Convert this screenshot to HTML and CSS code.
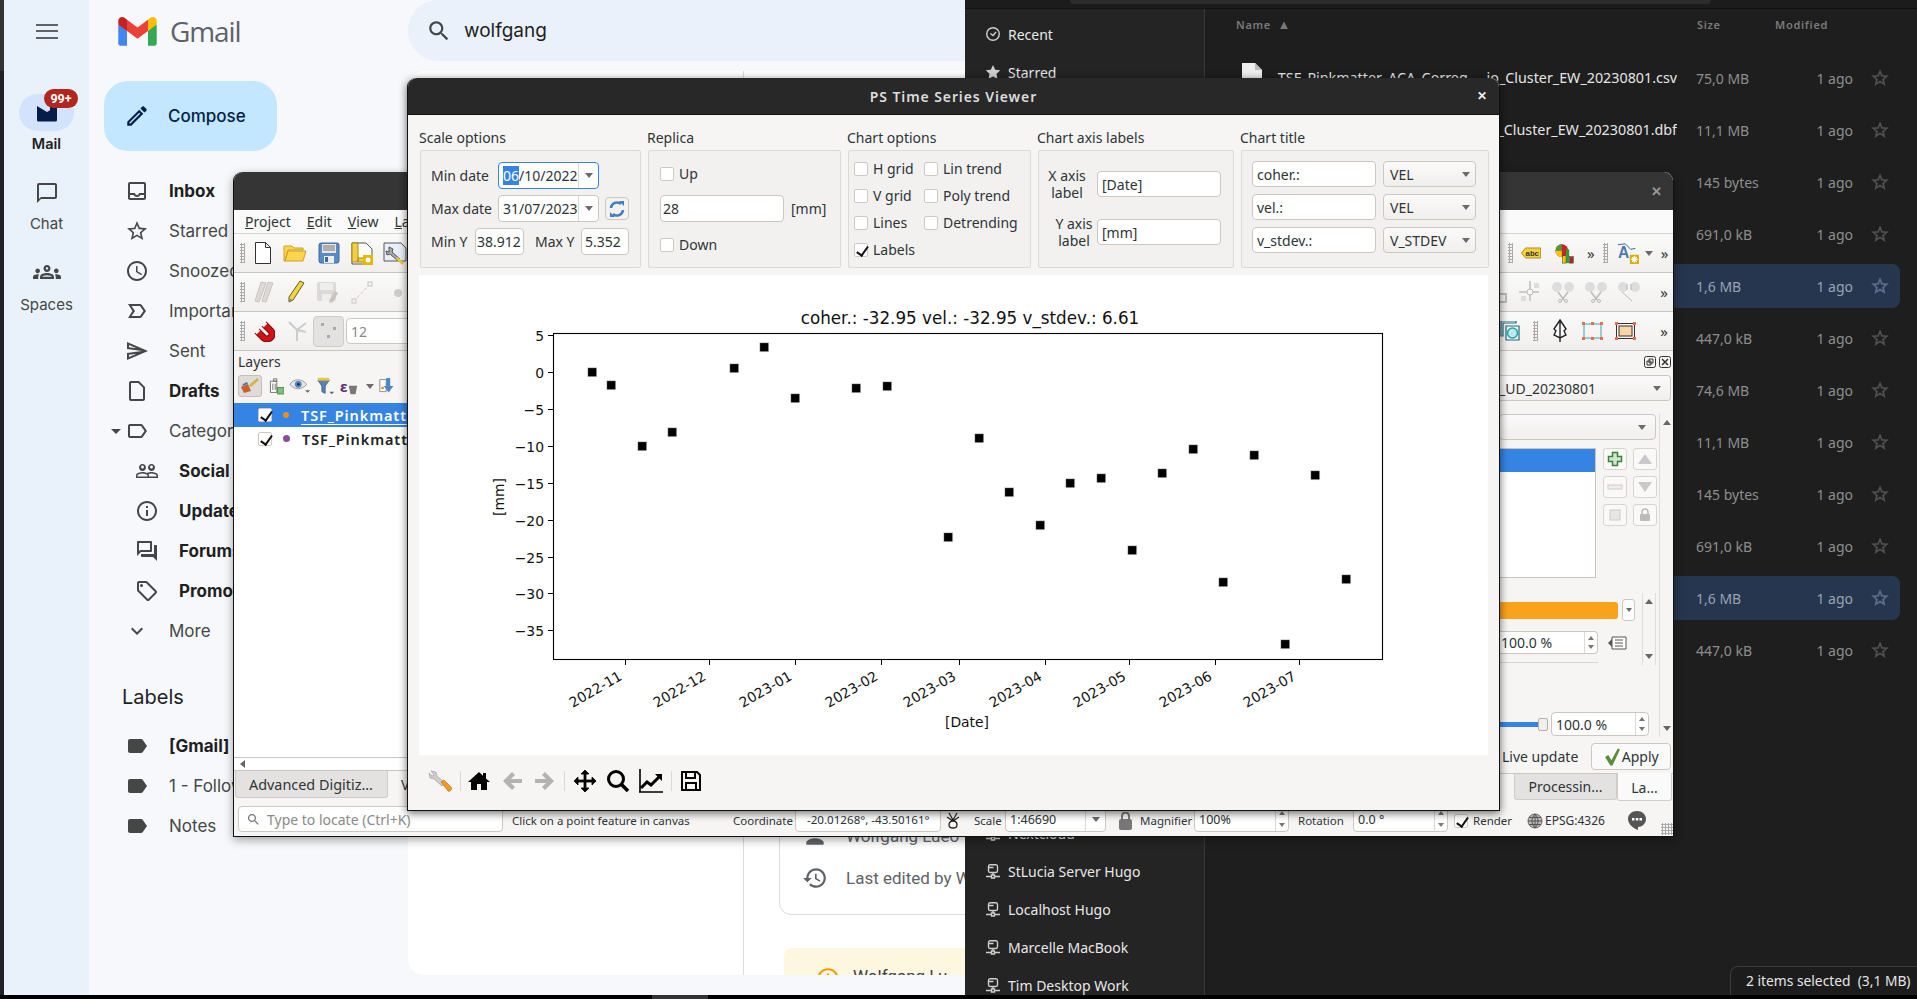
FILE: index.html
```html
<!DOCTYPE html>
<html lang="en">
<head>
  <meta charset="UTF-8">
  <title>PS Time Series Viewer</title>
  <link rel="stylesheet" href="styles.css">
</head>
<body>
  <svg class="defs" width="0" height="0">
    <defs>
      <symbol id="i-label" viewBox="0 0 24 24"><path d="M17.63 5.84C17.27 5.33 16.67 5 16 5L5 5.01C3.9 5.01 3 5.9 3 7v10c0 1.1.9 1.99 2 1.99L16 19c.67 0 1.27-.33 1.63-.84L22 12l-4.37-6.16z"/></symbol>
      <symbol id="i-net" viewBox="0 0 16 16"><path fill="none" stroke="currentColor" stroke-width="1.4" d="M3.500 3.500c0-1 .6-1.800 1.500-1.800h6c.9 0 1.500.8 1.500 1.800v4.300c0 1-.6 1.700-1.500 1.700H5c-.9 0-1.500-.7-1.500-1.700zM3.500 4.500h5M8 9.500V12M1 13.500h5M10 13.500h5M6.500 12h3v3h-3z"/></symbol>
      <symbol id="i-star" viewBox="0 0 16 16"><path fill="none" stroke="currentColor" stroke-width="1.6" d="M8 2.200l1.700 3.900 4.200.4-3.200 2.800 1 4.100L8 11.200 4.300 13.400l1-4.100L2.100 6.500l4.200-.4z"/></symbol>
      <g id="mk"><rect x="-4.500" y="-4.500" width="9" height="9" fill="#000" stroke="#ddd" stroke-width=".6"/></g>
    </defs>
  </svg>

  <div class="edge"></div>

  <!-- gmail behind everything -->
  <div class="gmail">
    <div class="rail">
      <svg class="burger" width="24" height="18" viewBox="0 0 24 18"><path fill="#5f6368" d="M1 2h22v2H1zM1 8h22v2H1zM1 15h22v2H1z"/></svg>
      <div class="rail-pill">
        <svg width="24" height="24" viewBox="0 0 24 24"><path fill="#041e49" d="M2 5l10 6 3-1.800V5h7v14c0 1-.8 1.500-1.500 1.500h-17C2.800 20.500 2 20 2 19z"/></svg>
        <span class="badge">99+</span>
      </div>
      <div class="rail-text rail-on">Mail</div>
      <svg class="rail-icon" width="24" height="24" viewBox="0 0 24 24"><path fill="#444746" d="M20 2H4c-1.100 0-2 .9-2 2v18l4-4h14c1.100 0 2-.9 2-2V4c0-1.100-.9-2-2-2zm0 14H6l-2 2V4h16v12z"/></svg>
      <div class="rail-text">Chat</div>
      <svg class="rail-icon rail-spaces" width="28" height="28" viewBox="0 0 24 24"><path fill="#444746" d="M4 13c1.100 0 2-.9 2-2s-.9-2-2-2-2 .9-2 2 .9 2 2 2zm1.130 1.100c-.37-.06-.74-.1-1.130-.1-.99 0-1.930.21-2.780.58C.48 14.900 0 15.620 0 16.430V18h4.500v-1.610c0-.83.23-1.610.63-2.290zM20 13c1.100 0 2-.9 2-2s-.9-2-2-2-2 .9-2 2 .9 2 2 2zm4 3.430c0-.81-.48-1.530-1.220-1.850-.85-.37-1.790-.58-2.780-.58-.39 0-.76.04-1.130.1.4.68.63 1.460.63 2.290V18H24v-1.570zm-7.760-2.780c-1.170-.52-2.610-.9-4.240-.9-1.630 0-3.070.39-4.240.9C6.680 14.130 6 15.210 6 16.390V18h12v-1.610c0-1.180-.68-2.260-1.760-2.740zM8.070 16c.09-.23.13-.39.91-.69.97-.38 1.990-.56 3.020-.56s2.050.18 3.020.56c.77.3.81.46.91.69H8.070zM12 8c.55 0 1 .45 1 1s-.45 1-1 1-1-.45-1-1 .45-1 1-1m0-2c-1.660 0-3 1.340-3 3s1.340 3 3 3 3-1.340 3-3-1.340-3-3-3z"/></svg>
      <div class="rail-text">Spaces</div>
    </div>

    <div class="side">
      <div class="logo">
        <svg width="39" height="29" viewBox="0 0 256 193">
          <path fill="#4285F4" d="M58.182 192.050V93.140L27.507 65.077 0 49.504v125.091c0 9.658 7.825 17.455 17.455 17.455h40.727Z"/>
          <path fill="#34A853" d="M197.818 192.050h40.727c9.659 0 17.455-7.826 17.455-17.455V49.505l-31.156 17.837-27.026 25.798v98.910Z"/>
          <path fill="#EA4335" d="m58.182 93.140-4.174-38.647 4.174-36.989L128 69.868l69.818-52.364 4.669 34.992-4.669 40.644L128 145.504z"/>
          <path fill="#FBBC04" d="M197.818 17.504V93.140L256 49.504V26.231c0-21.585-24.640-33.890-41.890-20.945l-16.292 12.218Z"/>
          <path fill="#C5221F" d="M0 49.504l26.759 20.070L58.182 93.140V17.504L41.890 5.286C24.610-7.660 0 4.646 0 26.230v23.273Z"/>
        </svg>
        <span class="logo-text">Gmail</span>
      </div>
      <div class="compose">
        <svg width="26" height="26" viewBox="0 0 24 24"><path fill="#041e49" d="M3 17.250V21h3.750L17.810 9.940l-3.750-3.750L3 17.250zM5.920 19H5v-.92l9.060-9.060.92.92L5.920 19zM20.710 7.040c.39-.39.39-1.020 0-1.410l-2.340-2.340c-.2-.2-.45-.29-.71-.29s-.51.1-.7.29l-1.830 1.830 3.750 3.750 1.830-1.830z"/></svg>
        <span>Compose</span>
      </div>
      <ul class="nav">
        <li class="bold"><svg viewBox="0 0 24 24"><path d="M19 3H5c-1.100 0-2 .9-2 2v14c0 1.100.9 2 2 2h14c1.100 0 2-.9 2-2V5c0-1.100-.9-2-2-2zm0 16H5v-3h3.560c.69 1.190 1.970 2 3.450 2s2.750-.81 3.450-2H19v3zm0-5h-4.990c0 1.100-.9 2-2 2s-2-.9-2-2H5V5h14v9z"/></svg>Inbox</li>
        <li><svg viewBox="0 0 24 24"><path d="M22 9.240l-7.190-.62L12 2 9.190 8.630 2 9.240l5.460 4.730L5.820 21 12 17.270 18.180 21l-1.630-7.030L22 9.240zM12 15.400l-3.760 2.270 1-4.280-3.320-2.880 4.380-.38L12 6.100l1.710 4.040 4.380.38-3.320 2.880 1 4.280L12 15.400z"/></svg>Starred</li>
        <li><svg viewBox="0 0 24 24"><path d="M11.990 2C6.470 2 2 6.480 2 12s4.470 10 9.990 10C17.520 22 22 17.520 22 12S17.520 2 11.990 2zM12 20c-4.420 0-8-3.580-8-8s3.580-8 8-8 8 3.580 8 8-3.580 8-8 8zm.5-13H11v6l5.250 3.150.75-1.230-4.500-2.670z"/></svg>Snoozed</li>
        <li><svg viewBox="0 0 24 24"><path d="M15 19H3l4.500-7L3 5h12c.65 0 1.260.31 1.630.84L21 12l-4.370 6.160c-.37.52-.98.84-1.630.84zm-8.500-2H15l3.500-5L15 7H6.500l3.500 5-3.500 5z"/></svg>Important</li>
        <li><svg viewBox="0 0 24 24"><path d="M4.010 6.030l7.510 3.220-7.520-1 .01-2.220m7.500 8.720L4 17.970v-2.220l7.510-1M2.010 3L2 10l15 2-15 2 .01 7L23 12 2.010 3z"/></svg>Sent</li>
        <li class="bold"><svg viewBox="0 0 24 24"><path d="M14 2H6c-1.100 0-1.990.9-1.990 2L4 20c0 1.100.89 2 1.990 2H18c1.100 0 2-.9 2-2V8l-6-6zM6 20V4h7.200L18 8.800V20H6z"/></svg>Drafts</li>
        <li class="caret"><svg viewBox="0 0 24 24"><path d="M17.630 5.840C17.270 5.330 16.670 5 16 5L5 5.010C3.900 5.010 3 5.900 3 7v10c0 1.100.9 1.990 2 1.990L16 19c.67 0 1.270-.33 1.630-.84L22 12l-4.370-6.160zM16 17H5V7h11l3.550 5L16 17z"/></svg>Categories</li>
        <li class="sub bold"><svg viewBox="0 0 24 24"><path d="M16.500 13c-1.200 0-3.070.34-4.500 1-1.430-.67-3.300-1-4.500-1C5.330 13 1 14.080 1 16.250V19h22v-2.750c0-2.170-4.330-3.250-6.500-3.250zm-4 4.500h-10v-1.250c0-.54 2.560-1.750 5-1.750s5 1.210 5 1.750v1.250zm9 0H14v-1.250c0-.46-.2-.86-.52-1.220.88-.3 1.960-.53 3.020-.53 2.440 0 5 1.210 5 1.750v1.250zM7.500 12c1.930 0 3.500-1.570 3.500-3.500S9.430 5 7.500 5 4 6.570 4 8.500 5.570 12 7.500 12zm0-5.500c.83 0 1.500.67 1.500 1.500s-.67 1.500-1.500 1.500S6 8.830 6 8s.67-1.500 1.500-1.500zm9 5.500c1.930 0 3.500-1.570 3.500-3.500S18.430 5 16.500 5 13 6.570 13 8.500s1.570 3.500 3.500 3.500zm0-5.500c.83 0 1.500.67 1.500 1.500s-.67 1.500-1.500 1.500S15 8.830 15 8s.67-1.500 1.500-1.500z"/></svg>Social</li>
        <li class="sub bold"><svg viewBox="0 0 24 24"><path d="M11 7h2v2h-2zm0 4h2v6h-2zm1-9C6.480 2 2 6.480 2 12s4.480 10 10 10 10-4.480 10-10S17.520 2 12 2zm0 18c-4.410 0-8-3.590-8-8s3.590-8 8-8 8 3.590 8 8-3.590 8-8 8z"/></svg>Updates</li>
        <li class="sub bold"><svg viewBox="0 0 24 24"><path d="M15 4v7H5.170L4 12.170V4h11m1-2H3c-.55 0-1 .45-1 1v14l4-4h10c.55 0 1-.45 1-1V3c0-.55-.45-1-1-1zm5 4h-2v9H6v2c0 .55.45 1 1 1h11l4 4V7c0-.55-.45-1-1-1z"/></svg>Forums</li>
        <li class="sub bold"><svg viewBox="0 0 24 24"><path d="M21.410 11.580l-9-9C12.050 2.220 11.550 2 11 2H4c-1.100 0-2 .9-2 2v7c0 .55.22 1.050.59 1.420l9 9c.36.36.86.58 1.410.58s1.050-.22 1.410-.59l7-7c.37-.36.59-.86.59-1.410s-.23-1.060-.59-1.420zM13 20.010L4 11V4h7v-.01l9 9-7 7.020z"/><circle cx="6.500" cy="6.500" r="1.500"/></svg>Promotions</li>
        <li><svg viewBox="0 0 24 24"><path d="M16.590 8.590L12 13.170 7.410 8.590 6 10l6 6 6-6z"/></svg>More</li>
      </ul>
      <div class="labels-title">Labels</div>
      <ul class="nav nav-labels">
        <li class="bold"><svg><use href="#i-label"/></svg>[Gmail]</li>
        <li><svg><use href="#i-label"/></svg>1 - Follow up</li>
        <li><svg><use href="#i-label"/></svg>Notes</li>
      </ul>
    </div>

    <div class="gm-main">
      <div class="search">
        <svg width="26" height="26" viewBox="0 0 24 24"><path fill="#444746" d="M15.500 14h-.79l-.28-.27C15.410 12.590 16 11.110 16 9.500 16 5.910 13.090 3 9.500 3S3 5.910 3 9.500 5.910 16 9.500 16c1.610 0 3.090-.59 4.230-1.570l.27.28v.79l5 4.990L20.490 19l-4.990-5zm-6 0C7.010 14 5 11.990 5 9.500S7.010 5 9.500 5 14 7.010 14 9.500 11.990 14 9.500 14z"/></svg>
        <span>wolfgang</span>
      </div>
      <div class="mail-card">
        <div class="mail-body"></div>
        <div class="mail-aside">
          <div class="doc-box">
            <div class="doc-row doc-owner">
              <svg width="26" height="26" viewBox="0 0 24 24"><path fill="#5f6368" d="M4 18v2h16v-2c0-2.700-5.300-4-8-4s-8 1.300-8 4z"/></svg>
              <span>Wolfgang Lueo</span>
            </div>
            <div class="doc-row">
              <svg width="26" height="26" viewBox="0 0 24 24"><path fill="#5f6368" d="M13 3c-4.970 0-9 4.030-9 9H1l3.890 3.890.07.14L9 12H6c0-3.870 3.130-7 7-7s7 3.130 7 7-3.130 7-7 7c-1.930 0-3.680-.79-4.940-2.060l-1.420 1.420C8.270 19.990 10.510 21 13 21c4.970 0 9-4.030 9-9s-4.030-9-9-9zm-1 5v5l4.280 2.540.72-1.210-3.500-2.080V8H12z"/></svg>
              <span>Last edited by W</span>
            </div>
          </div>
          <div class="note">
            <svg width="26" height="26" viewBox="0 0 24 24"><path fill="#f29900" d="M11 15h2v2h-2zm0-8h2v6h-2zm1-5C6.480 2 2 6.480 2 12s4.480 10 10 10 10-4.480 10-10S17.520 2 12 2zm0 18c-4.410 0-8-3.590-8-8s3.590-8 8-8 8 3.590 8 8-3.590 8-8 8z"/></svg>
            <span>Wolfgang Lu</span>
          </div>
        </div>
      </div>
    </div>
  </div>

  <!-- file manager -->
  <div class="files">
    <div class="files-top"><div class="files-search"></div></div>
    <div class="files-wrap">
      <ul class="places">
        <li><svg width="16" height="16" viewBox="0 0 16 16"><circle cx="8" cy="8" r="6.300" fill="none" stroke="currentColor" stroke-width="1.400"/><path fill="none" stroke="currentColor" stroke-width="1.400" d="M5.500 7.500L8 9.500l3-3.500"/></svg>Recent</li>
        <li><svg width="16" height="16" viewBox="0 0 16 16"><path fill="currentColor" d="M8 1l2.200 4.700 5.100.6-3.800 3.500 1 5.100L8 12.400 3.500 14.900l1-5.100L.7 6.300l5.100-.6z"/></svg>Starred</li>
        <li class="places-gap"><svg><use href="#i-net"/></svg>Nextcloud</li>
        <li><svg><use href="#i-net"/></svg>StLucia Server Hugo</li>
        <li><svg><use href="#i-net"/></svg>Localhost Hugo</li>
        <li><svg><use href="#i-net"/></svg>Marcelle MacBook</li>
        <li><svg><use href="#i-net"/></svg>Tim Desktop Work</li>
      </ul>
      <div class="file-list">
        <div class="file-head"><span class="fh-name">Name <em>&#9650;</em></span><span class="fh-size">Size</span><span>Modified</span></div>
        <div class="file-row"><span class="f-name"><svg class="f-doc" width="21" height="26" viewBox="0 0 21 26"><path fill="#eee" d="M1 0h13l7 7v19H1z"/><path fill="#bbb" d="M14 0l7 7h-7z"/></svg>TSF_Pinkmatter_ACA_Correg... &#160;io_Cluster_EW_20230801.csv</span><span class="f-size">75,0 MB</span><span class="f-mod">1 ago</span><svg class="f-star"><use href="#i-star"/></svg></div>
        <div class="file-row"><span class="f-name">TSF_Pinkmatter_ACA_Correg... &#160;io_Cluster_EW_20230801.dbf</span><span class="f-size">11,1 MB</span><span class="f-mod">1 ago</span><svg class="f-star"><use href="#i-star"/></svg></div>
        <div class="file-row"><span class="f-name"></span><span class="f-size">145 bytes</span><span class="f-mod">1 ago</span><svg class="f-star"><use href="#i-star"/></svg></div>
        <div class="file-row"><span class="f-name"></span><span class="f-size">691,0 kB</span><span class="f-mod">1 ago</span><svg class="f-star"><use href="#i-star"/></svg></div>
        <div class="file-row sel"><span class="f-name"></span><span class="f-size">1,6 MB</span><span class="f-mod">1 ago</span><svg class="f-star"><use href="#i-star"/></svg></div>
        <div class="file-row"><span class="f-name"></span><span class="f-size">447,0 kB</span><span class="f-mod">1 ago</span><svg class="f-star"><use href="#i-star"/></svg></div>
        <div class="file-row"><span class="f-name"></span><span class="f-size">74,6 MB</span><span class="f-mod">1 ago</span><svg class="f-star"><use href="#i-star"/></svg></div>
        <div class="file-row"><span class="f-name"></span><span class="f-size">11,1 MB</span><span class="f-mod">1 ago</span><svg class="f-star"><use href="#i-star"/></svg></div>
        <div class="file-row"><span class="f-name"></span><span class="f-size">145 bytes</span><span class="f-mod">1 ago</span><svg class="f-star"><use href="#i-star"/></svg></div>
        <div class="file-row"><span class="f-name"></span><span class="f-size">691,0 kB</span><span class="f-mod">1 ago</span><svg class="f-star"><use href="#i-star"/></svg></div>
        <div class="file-row sel"><span class="f-name"></span><span class="f-size">1,6 MB</span><span class="f-mod">1 ago</span><svg class="f-star"><use href="#i-star"/></svg></div>
        <div class="file-row"><span class="f-name"></span><span class="f-size">447,0 kB</span><span class="f-mod">1 ago</span><svg class="f-star"><use href="#i-star"/></svg></div>
      </div>
    </div>
    <div class="file-status">2 items selected &nbsp;(3,1 MB)</div>
  </div>
  <div class="bottom-bar"><div class="bottom-tab"></div></div>

  <!-- qgis main window -->
  <div class="qgis">
    <div class="q-title"><span class="q-close">&#10005;</span></div>
    <div class="q-menu"><span><u>P</u>roject</span><span><u>E</u>dit</span><span><u>V</u>iew</span><span><u>L</u>ayer</span></div>

    <div class="q-tools">
      <div class="q-left">
        <i class="grip"></i>
        <svg width="20" height="24" viewBox="0 0 20 24"><path fill="#fff" stroke="#333" d="M2.500 1.500h10l5 5v16h-15zM12.500 1.500v5h5"/></svg>
        <svg class="t1" width="24" height="20" viewBox="0 0 24 20"><path fill="#fcd54d" stroke="#c9a227" d="M1 3h8l2 2h9v2H5L2 18H1zM5 8h18l-3 10H2z"/></svg>
        <svg class="t1b" width="22" height="22" viewBox="0 0 22 22"><rect x="1" y="1" width="20" height="20" rx="2" fill="#5b8ac1" stroke="#3e6a9e"/><rect x="4" y="2" width="14" height="9" fill="#e6e6e6"/><path stroke="#777" d="M5 4h12M5 6h12M5 8h12"/><rect x="6" y="14" width="10" height="7" fill="#eee"/><rect x="7" y="15" width="3" height="5" fill="#3e6a9e"/></svg>
        <svg class="t1" width="24" height="24" viewBox="0 0 24 24"><path fill="#fff" stroke="#555" d="M2 2h14l6 6v15H2z"/><path fill="#f1cf3e" stroke="#a98a1b" d="M2 2h6v19H2zM8 17h8v4H8z"/><rect x="13" y="14" width="10" height="10" fill="#e6b800"/><circle cx="18" cy="19" r="2.500" fill="#fff"/></svg>
        <svg class="t1c" width="24" height="24" viewBox="0 0 24 24"><path fill="#e9effa" stroke="#555" d="M1 2h17l5 5v13H1z"/><path fill="#aaa" stroke="#555" d="M6 6l4 2-1 3 8 7-2 2-8-7-3 1-1-4 3 1z"/><path fill="#ecc93b" d="M15 16l6 6-2 2-6-6z"/></svg>
      </div>
      <div class="q-right">
        <i class="grip"></i>
        <svg class="r-abc" width="22" height="12" viewBox="0 0 22 12"><path fill="#f4d03f" stroke="#a98a1b" d="M5 .5h16.500v11H5L.5 6z"/><text x="5" y="9" font-size="8.500" font-weight="700" fill="#333" font-family="Liberation Sans">abc</text></svg>
        <svg class="r-pie" width="21" height="21" viewBox="0 0 21 21"><circle cx="7.500" cy="7.500" r="7" fill="#c22"/><path fill="#4c9a3a" d="M7.500.5A7 7 0 0 0 .5 7.500l7 0z"/><path fill="#f1c40f" d="M.5 7.500A7 7 0 0 0 7.500 14.500v-7z"/><rect x="8" y="13" width="4" height="8" fill="#f1c40f" stroke="#333" stroke-width=".5"/><rect x="12" y="6" width="3.500" height="15" fill="#2e9a38"/><rect x="16" y="14" width="4" height="7" fill="#b22" stroke="#333" stroke-width=".5"/></svg>
        <span class="more">&#187;</span>
        <i class="grip r-grip"></i>
        <svg class="r-a" width="24" height="24" viewBox="0 0 24 24"><path fill="none" stroke="#2c5a92" d="M1 3l8-1 6 6 5-1"/><text x="1" y="18" font-size="17" font-weight="700" fill="#4a79b4" font-family="Liberation Sans">A</text><rect x="14" y="14" width="10" height="10" rx="1" fill="#d9ae10"/><path stroke="#fff" stroke-width="1.500" d="M19 15.500v7M15.500 19h7M16.500 16.500l5 5M21.500 16.500l-5 5"/></svg>
        <i class="drop r-drop"></i>
        <span class="more">&#187;</span>
      </div>
    </div>

    <div class="q-tools">
      <div class="q-left faded">
        <i class="grip"></i>
        <svg width="24" height="24" viewBox="0 0 24 24"><path fill="#ddd9d6" stroke="#c8c4c0" d="M8 2l5 1L6 22 2 21zM15 2l5 1-7 19-4-1z"/></svg>
        <svg class="t2" width="18" height="24" viewBox="0 0 18 24"><path fill="#f1d546" stroke="#6b5c10" d="M13 1l4 2L6 20l-4 2 0-5z"/><path fill="#888" d="M2 18l3 2-3 2z"/></svg>
        <svg class="t2b" width="24" height="24" viewBox="0 0 24 24"><rect x="1" y="2" width="19" height="19" rx="2" fill="#ddd9d6"/><rect x="4" y="3" width="13" height="7" fill="#eee"/><rect x="6" y="14" width="9" height="7" fill="#eee"/><path fill="#c8c4c0" d="M19 11l3 2-5 9-4 1 1-4z"/></svg>
        <svg class="t2" width="24" height="24" viewBox="0 0 24 24"><path stroke="#c8c4c0" stroke-dasharray="3 2" d="M4 21L20 4"/><rect x="2" y="19" width="4" height="4" fill="#f6f5f4" stroke="#c8c4c0"/><rect x="18" y="2" width="4" height="4" fill="#f6f5f4" stroke="#c8c4c0"/></svg>
        <svg class="t2c" width="24" height="24" viewBox="0 0 24 24"><circle cx="12" cy="13" r="4" fill="#ccc"/></svg>
      </div>
      <div class="q-right faded">
        <svg class="r2-a" width="24" height="24" viewBox="0 0 24 24"><path fill="none" stroke="#bbb" stroke-width="2" d="M0 8h10M4 14h12v8H4z"/></svg>
        <svg class="r2-b" width="24" height="24" viewBox="0 0 24 24"><path stroke="#ccc" stroke-width="2" fill="none" d="M12 1v20M1 12h20"/><circle cx="12" cy="12" r="3" fill="#f6f5f4" stroke="#bbb"/><rect x="16" y="3" width="5" height="5" fill="#ddd"/><rect x="3" y="16" width="5" height="5" fill="#ddd"/></svg>
        <svg class="r2" width="24" height="24" viewBox="0 0 24 24"><circle cx="6" cy="7" r="5" fill="#ddd"/><circle cx="18" cy="7" r="5" fill="#ddd"/><path fill="none" stroke="#bbb" stroke-width="1.500" d="M7 12l6 8M17 12l-6 8"/><circle cx="9" cy="21" r="1.500" fill="none" stroke="#bbb"/><circle cx="15" cy="21" r="1.500" fill="none" stroke="#bbb"/></svg>
        <svg class="r2" width="24" height="24" viewBox="0 0 24 24"><circle cx="6" cy="7" r="5" fill="#ddd"/><circle cx="18" cy="7" r="5" fill="#ddd"/><path fill="none" stroke="#bbb" stroke-width="1.500" d="M7 12l6 8M17 12l-6 8"/><circle cx="9" cy="21" r="1.500" fill="none" stroke="#bbb"/><circle cx="15" cy="21" r="1.500" fill="none" stroke="#bbb"/></svg>
        <svg class="r2" width="24" height="24" viewBox="0 0 24 24"><circle cx="6" cy="7" r="5" fill="#ddd"/><circle cx="18" cy="7" r="5" fill="#ddd"/><path fill="none" stroke="#bbb" d="M5 12l10 9M10 4v6M14 4v6"/></svg>
        <span class="more">&#187;</span>
      </div>
    </div>

    <div class="q-tools">
      <div class="q-left">
        <i class="grip"></i>
        <svg class="magnet" width="22" height="22" viewBox="0 0 22 22"><path fill="none" stroke="#7d0a0a" stroke-width="7" d="M4 11l7 7a5 5 0 0 0 7-7l-7-7"/><path fill="none" stroke="#cf1212" stroke-width="5" d="M4 11l7 7a5 5 0 0 0 7-7l-7-7"/><path stroke="#f3f3f3" stroke-width="5" d="M3.500 10.500l2 2M10.500 3.500l2 2"/></svg>
        <svg class="t3 faded" width="24" height="24" viewBox="0 0 24 24"><path fill="none" stroke="#ccc" stroke-width="2" d="M4 3l8 8 9-7M12 11v11M12 11l9 2"/></svg>
        <span class="snap-btn"><svg width="24" height="20" viewBox="0 0 24 20"><rect x="4" y="2" width="3" height="3" fill="#aaa"/><rect x="16" y="6" width="3" height="3" fill="#aaa"/><rect x="10" y="14" width="3" height="3" fill="#aaa"/></svg></span>
        <span class="field snap-num">12</span>
      </div>
      <div class="q-right">
        <svg class="r3a" width="20" height="20" viewBox="0 0 20 20"><path fill="none" stroke="#1f6f7a" stroke-width="1.200" d="M1 0h15v2H3v13H1zM6 5h13v14H6z"/><circle cx="12.500" cy="12" r="5" fill="#bfe9ee" stroke="#25a2b0" stroke-width="1.500"/></svg>
        <i class="grip r-grip3"></i>
        <svg class="r3b" width="16" height="24" viewBox="0 0 16 24"><path fill="#fff" stroke="#222" stroke-width="1.400" d="M8 1l6 9-2 2 2 4-6 3-6-3 2-4-2-2zM8 1v22"/></svg>
        <svg class="r3c" width="21" height="18" viewBox="0 0 21 18"><rect x="2" y="2" width="17" height="14" fill="none" stroke="#3aa6b8"/><path fill="#ef6c4a" d="M0 0h3v3H0zM18 0h3v3h-3zM0 15h3v3H0zM18 15h3v3h-3zM9 0h3v3H9zM9 15h3v3H9z"/></svg>
        <svg class="r3d" width="21" height="18" viewBox="0 0 21 18"><rect x="4" y="4" width="13" height="10" fill="#fcd5a6" stroke="#333"/><rect x="1.500" y="1.500" width="18" height="15" fill="none" stroke="#333"/><path fill="#ef6c4a" d="M0 0h3v3H0zM18 0h3v3h-3zM0 15h3v3H0zM18 15h3v3h-3z"/></svg>
        <span class="more">&#187;</span>
      </div>
    </div>

    <div class="q-body">
      <div class="layers">
        <div class="layers-title">Layers</div>
        <div class="layers-tools">
          <span class="pressed"><svg width="20" height="16" viewBox="0 0 20 16"><path fill="#c8622a" d="M1 9l7-3 3 7-7 2z"/><path fill="#4a6fb5" d="M3 6l4-2 1 2-6 2z"/><path stroke="#d6b13c" stroke-width="2.500" d="M10 8l8-7"/></svg></span>
          <svg width="16" height="18" viewBox="0 0 20 22"><path fill="#fff" stroke="#555" d="M3 5h8v14H3zM7 2h4v3H7z"/><path stroke="#555" d="M6 8v8M9 8v8"/><rect x="12" y="13" width="8" height="8" fill="#7fbf7f" stroke="#3f7f3f"/></svg>
          <svg width="22" height="16" viewBox="0 0 26 18"><path fill="#e2e5ea" stroke="#8a8f99" d="M1 7c5-7 14-7 20 0-6 7-15 7-20 0z"/><circle cx="11" cy="7" r="4" fill="#4f84bd"/><circle cx="11" cy="7" r="1.500" fill="#223"/><path fill="#666" d="M19 14h6l-3 3z"/></svg>
          <svg width="18" height="18" viewBox="0 0 22 22"><path fill="#5883b5" stroke="#3a5f8c" d="M1 4h14L10 11v9l-4-2v-7z"/><rect x="1" y="1" width="14" height="3.500" fill="#e8c93c"/><path fill="#666" d="M15 18h6l-3 3z"/></svg>
          <span class="eps"><b>&#949;</b><svg width="10" height="10" viewBox="0 0 12 12"><path fill="#777" d="M1 1h10l-2 10H3z"/></svg></span>
          <i class="drop"></i>
          <svg width="16" height="18" viewBox="0 0 20 22"><path fill="#fff" stroke="#777" d="M1 3h8v15H1z"/><path fill="#4a86c8" d="M9 1h5v10h4l-6 8-6-8h3z"/><rect x="3" y="12" width="3" height="3" fill="#e08c2c"/></svg>
        </div>
        <div class="layer-tree">
          <div class="layer on"><i class="check tick"></i><i class="dot dot-o"></i><span>TSF_Pinkmatter_ACA_Correg</span></div>
          <div class="layer"><i class="check tick"></i><i class="dot dot-p"></i><span>TSF_Pinkmatter_ACA_Correg</span></div>
        </div>
        <div class="hscroll"><i class="arrow-left"></i></div>
        <div class="dock-tabs"><span class="dock-tab">Advanced Digitiz...</span><span class="dock-tab2">Vector</span></div>
      </div>

      <div class="style-panel">
        <div class="panel-head">
          <svg width="12" height="12" viewBox="0 0 12 12"><rect x=".5" y=".5" width="11" height="11" rx="2" fill="none" stroke="#333"/><path fill="none" stroke="#333" d="M5 3h4v4H5zM3 5h4v4H3z"/></svg>
          <svg width="12" height="12" viewBox="0 0 12 12"><rect x=".5" y=".5" width="11" height="11" rx="2" fill="none" stroke="#333"/><path stroke="#333" stroke-width="1.500" d="M3 3l6 6M9 3l-6 6"/></svg>
        </div>
        <div class="combo layer-combo"><span>_UD_20230801</span><i class="drop"></i></div>
        <div class="panel-wrap">
          <div class="panel-main">
            <div class="combo symbol-combo"><i class="drop"></i></div>
            <div class="sym-row">
              <div class="sym-list"><div class="sym-on"></div></div>
              <div class="sym-btns">
                <span class="sq"><svg width="16" height="16" viewBox="0 0 16 16"><path fill="#cfe6cf" stroke="#3f7f3f" stroke-width="1.500" d="M5.500 1.500h5v4h4v5h-4v4h-5v-4h-4v-5h4z"/></svg></span>
                <span class="sq"><svg width="16" height="16" viewBox="0 0 16 16"><path fill="#c9c9c9" d="M8 3l7 10H1z"/></svg></span>
                <span class="sq"><svg width="16" height="16" viewBox="0 0 16 16"><rect x="1" y="6" width="14" height="4" fill="#eee" stroke="#d8c6c6"/></svg></span>
                <span class="sq"><svg width="16" height="16" viewBox="0 0 16 16"><path fill="#c9c9c9" d="M8 13L1 3h14z"/></svg></span>
                <span class="sq"><svg width="16" height="16" viewBox="0 0 16 16"><rect x="3" y="3" width="10" height="10" fill="#e6e6e6" stroke="#ccc"/></svg></span>
                <span class="sq"><svg width="16" height="16" viewBox="0 0 16 16"><rect x="3" y="7" width="10" height="7" rx="1" fill="#bbb"/><path fill="none" stroke="#bbb" stroke-width="1.500" d="M5 7V5a3 3 0 0 1 6 0v2"/></svg></span>
              </div>
            </div>
            <div class="color-wrap">
              <div class="color-left">
                <div class="color-row"><div class="color-bar"></div><span class="color-drop"><i class="drop"></i></span></div>
                <div class="opacity-row">
                  <span class="field spin-a">100.0 %<i class="spin"></i></span>
                  <svg width="22" height="18" viewBox="0 0 22 18"><path fill="#fff" stroke="#555" d="M5 3h14v12H5z"/><path stroke="#555" d="M8 6h8M8 9h8M8 12h8"/><path fill="#555" d="M1 9l4-4v8z"/></svg>
                </div>
                <div class="hline"></div>
              </div>
              <div class="mini-scroll"><i class="up"></i><b></b><i class="down"></i></div>
            </div>
            <div class="slider-row">
              <div class="slider"><b></b></div>
              <span class="field spin-b">100.0 %<i class="spin"></i></span>
            </div>
          </div>
          <div class="side-scroll"><i class="up"></i><b></b><i class="down"></i></div>
        </div>
        <div class="apply-row">
          <span>Live update</span>
          <span class="apply"><svg width="17" height="19" viewBox="0 0 16 17"><path fill="#5b8c3a" d="M1 9l3-2 3 5L13 1l2 1-7 15H6z"/></svg>Apply</span>
        </div>
        <div class="panel-tabs"><span class="ptab">Processin...</span><span class="ptab ptab-on">La...</span></div>
      </div>
    </div>

    <div class="q-status">
      <div class="locator"><svg width="15" height="15" viewBox="0 0 24 24"><path fill="#777" d="M15.500 14h-.79l-.28-.27C15.410 12.590 16 11.110 16 9.500 16 5.910 13.090 3 9.500 3S3 5.910 3 9.500 5.910 16 9.500 16c1.610 0 3.090-.59 4.230-1.570l.27.28v.79l5 4.990L20.490 19l-4.990-5zm-6 0C7.010 14 5 11.990 5 9.500S7.010 5 9.500 5 14 7.010 14 9.500 11.990 14 9.500 14z"/></svg>Type to locate (Ctrl+K)</div>
      <span class="st-msg">Click on a point feature in canvas</span>
      <span class="st-lab">Coordinate</span>
      <span class="field st-coord">-20.01268&#176;, -43.50161&#176;</span>
      <svg class="st-ico" width="16" height="17" viewBox="0 0 16 17"><path fill="none" stroke="#222" stroke-width="1.300" d="M4 1l4 7 4-7M2 5l6 4 6-4M8 9c-3 0-4 2-4 4s2 3 4 3 4-1 4-3-1-4-4-4z"/></svg>
      <span class="st-lab st-scale">Scale</span>
      <span class="field st-scalebox">1:46690<i class="st-arrow"><i class="drop"></i></i></span>
      <svg class="st-lock" width="13" height="18" viewBox="0 0 13 18"><rect y="7" width="13" height="11" rx="2" fill="#777"/><path fill="none" stroke="#777" stroke-width="2" d="M3 7V4a3.500 3.500 0 0 1 7 0v3"/></svg>
      <span class="st-lab st-mag">Magnifier</span>
      <span class="field st-spin">100%<i class="spin"></i></span>
      <span class="st-lab st-rot">Rotation</span>
      <span class="field st-spin st-rotbox">0.0 &#176;<i class="spin"></i></span>
      <i class="check tick st-check"></i>
      <span class="st-lab st-render">Render</span>
      <svg class="st-globe" width="16" height="16" viewBox="0 0 16 16"><circle cx="8" cy="8" r="7" fill="#bbb" stroke="#666"/><path fill="none" stroke="#555" d="M1 8h14M2 4.500h12M2 11.500h12M8 1v14M8 1c-4 4-4 10 0 14M8 1c4 4 4 10 0 14"/></svg>
      <span class="st-lab st-epsg">EPSG:4326</span>
      <svg class="st-msgs" width="18" height="19" viewBox="0 0 18 19"><path fill="#555" d="M9 0c5 0 9 3.500 9 8s-4 8-8 8v3c-5-2-10-6-10-11C0 3.500 4 0 9 0z"/><path fill="#fff" d="M4 7h2.500v2.500H4zM7.800 7h2.500v2.500H7.800zM11.500 7H14v2.500h-2.500z"/></svg>
      <i class="grip st-grip"></i>
    </div>
  </div>

  <!-- plugin dialog on top -->
  <div class="viewer">
    <div class="v-title">PS Time Series Viewer<span class="v-close">&#10005;</span></div>
    <div class="v-options">
      <section class="group">
        <h4>Scale options</h4>
        <div class="box box-scale">
          <div class="o-row"><label class="lab-date">Min date</label><span class="field date focus"><span><mark>06</mark>/10/2022</span><i class="date-arrow"><i class="drop"></i></i></span></div>
          <div class="o-row"><label class="lab-date">Max date</label><span class="field date"><span>31/07/2023</span><i class="date-arrow"><i class="drop"></i></i></span>
            <span class="refresh"><svg width="16" height="18" viewBox="0 0 16 18"><path fill="none" stroke="#3f7fc1" stroke-width="2.500" d="M2 8a6 6 0 0 1 10-4M14 10a6 6 0 0 1-10 4"/><path fill="#3f7fc1" d="M10 1h5v5zM6 17H1v-5z"/></svg></span></div>
          <div class="o-row"><label class="lab-miny">Min Y</label><span class="field num-a">38.912</span><label class="lab-maxy">Max Y</label><span class="field num-b">5.352</span></div>
        </div>
      </section>
      <section class="group">
        <h4>Replica</h4>
        <div class="box box-replica">
          <div class="o-row rep-up"><i class="check"></i><span class="chk-text">Up</span></div>
          <div class="o-row rep-mid"><span class="field rep-input">28</span><span class="rep-unit">[mm]</span></div>
          <div class="o-row"><i class="check"></i><span class="chk-text">Down</span></div>
        </div>
      </section>
      <section class="group">
        <h4>Chart options</h4>
        <div class="box box-chart">
          <div class="c-item"><i class="check"></i>H grid</div><div class="c-item"><i class="check"></i>Lin trend</div>
          <div class="c-item"><i class="check"></i>V grid</div><div class="c-item"><i class="check"></i>Poly trend</div>
          <div class="c-item"><i class="check"></i>Lines</div><div class="c-item"><i class="check"></i>Detrending</div>
          <div class="c-item"><i class="check tick"></i>Labels</div>
        </div>
      </section>
      <section class="group">
        <h4>Chart axis labels</h4>
        <div class="box box-axis">
          <div class="a-row"><label>X axis<br>label</label><span class="field">[Date]</span></div>
          <div class="a-row a-y"><label>Y axis<br>label</label><span class="field">[mm]</span></div>
        </div>
      </section>
      <section class="group">
        <h4>Chart title</h4>
        <div class="box box-title">
          <span class="field">coher.:</span><span class="combo">VEL<i class="drop"></i></span>
          <span class="field">vel.:</span><span class="combo">VEL<i class="drop"></i></span>
          <span class="field">v_stdev.:</span><span class="combo">V_STDEV<i class="drop"></i></span>
        </div>
      </section>
    </div>

    <div class="v-chart">
      <svg class="plot" width="1070" height="480" viewBox="419 275 1070 480">
        <text class="p-title" x="970" y="324" text-anchor="middle">coher.: -32.95 vel.: -32.95 v_stdev.: 6.61</text>
        <rect x="553.500" y="333.500" width="829" height="326" fill="#fff" stroke="#000" stroke-width="1.100"/>
        <g stroke="#000" stroke-width="1">
          <path d="M548 335.500h5M548 372.500h5M548 409.500h5M548 446.500h5M548 483.500h5M548 520.500h5M548 557.500h5M548 593.500h5M548 630.500h5"/>
          <path d="M625.500 660v5M709.500 660v5M795.500 660v5M881.500 660v5M959.500 660v5M1045.500 660v5M1129.500 660v5M1215.500 660v5M1299.500 660v5"/>
        </g>
        <g class="p-ticks" text-anchor="end">
          <text x="544" y="341">5</text>
          <text x="544" y="378">0</text>
          <text x="544" y="415">&#8722;5</text>
          <text x="544" y="452">&#8722;10</text>
          <text x="544" y="489">&#8722;15</text>
          <text x="544" y="526">&#8722;20</text>
          <text x="544" y="563">&#8722;25</text>
          <text x="544" y="599">&#8722;30</text>
          <text x="544" y="636">&#8722;35</text>
          <text transform="rotate(-30 623 679)" x="623" y="679">2022-11</text>
          <text transform="rotate(-30 707 679)" x="707" y="679">2022-12</text>
          <text transform="rotate(-30 793 679)" x="793" y="679">2023-01</text>
          <text transform="rotate(-30 879 679)" x="879" y="679">2023-02</text>
          <text transform="rotate(-30 957 679)" x="957" y="679">2023-03</text>
          <text transform="rotate(-30 1043 679)" x="1043" y="679">2023-04</text>
          <text transform="rotate(-30 1127 679)" x="1127" y="679">2023-05</text>
          <text transform="rotate(-30 1213 679)" x="1213" y="679">2023-06</text>
          <text transform="rotate(-30 1297 679)" x="1297" y="679">2023-07</text>
        </g>
        <text class="p-ticks" x="967" y="727" text-anchor="middle">[Date]</text>
        <text class="p-ticks" transform="rotate(-90 504 497)" x="504" y="497" text-anchor="middle">[mm]</text>
        <g>
          <use href="#mk" x="592.300" y="372.300"/><use href="#mk" x="611.300" y="385.300"/><use href="#mk" x="642.300" y="446.300"/>
          <use href="#mk" x="672.300" y="432.300"/><use href="#mk" x="734.300" y="368.300"/><use href="#mk" x="764.300" y="347.300"/>
          <use href="#mk" x="795.300" y="398.300"/><use href="#mk" x="856.300" y="388.300"/><use href="#mk" x="887.300" y="386.300"/>
          <use href="#mk" x="948.300" y="537.300"/><use href="#mk" x="979.300" y="438.300"/><use href="#mk" x="1009.300" y="492.300"/>
          <use href="#mk" x="1040.300" y="525.300"/><use href="#mk" x="1070.300" y="483.300"/><use href="#mk" x="1101.300" y="478.300"/>
          <use href="#mk" x="1132.300" y="550.300"/><use href="#mk" x="1162.300" y="473.300"/><use href="#mk" x="1193.300" y="449.300"/>
          <use href="#mk" x="1223.300" y="582.300"/><use href="#mk" x="1254.300" y="455.300"/><use href="#mk" x="1285.300" y="644.300"/>
          <use href="#mk" x="1315.300" y="475.300"/><use href="#mk" x="1346.300" y="579.300"/>
        </g>
      </svg>
    </div>

    <div class="v-foot">
      <svg width="24" height="24" viewBox="0 0 24 24"><path fill="#ccc" stroke="#999" stroke-width=".6" d="M3 2l5 1 1 4 8 7-3 3-8-7-4-1-1-5 3 3 2-1z"/><path fill="#f29a24" stroke="#b9700f" stroke-width=".6" d="M13 13l3-2 7 7c1 1 1 2 0 3s-2 2-3 1z"/></svg>
      <i class="sep"></i>
      <svg width="22" height="22" viewBox="0 0 22 22"><path d="M11 2L0 12h3v8h6v-6h4v6h6v-8h3l-4-3.600V3h-3v2.700z"/></svg>
      <svg class="f-gap" width="22" height="22" viewBox="0 0 22 22"><path fill="#b3b3b3" d="M11 2l3 3-4 4h11v4H10l4 4-3 3-9-9z"/></svg>
      <svg class="f-gap" width="22" height="22" viewBox="0 0 22 22"><path fill="#b3b3b3" d="M11 2L8 5l4 4H1v4h11l-4 4 3 3 9-9z"/></svg>
      <i class="sep sep-mid"></i>
      <svg width="24" height="24" viewBox="0 0 24 24"><path d="M12 1l4 4h-3v6h6V8l4 4-4 4v-3h-6v6h3l-4 4-4-4h3v-6H5v3l-4-4 4-4v3h6V5H8z" stroke="#000" stroke-width=".8"/></svg>
      <svg class="f-gap2" width="24" height="24" viewBox="0 0 24 24"><circle cx="10" cy="10" r="7.500" fill="none" stroke="#000" stroke-width="3"/><path stroke="#000" stroke-width="3.500" d="M15 15l7 7"/></svg>
      <svg class="f-gap2" width="24" height="24" viewBox="0 0 24 24"><path stroke="#000" stroke-width="1.600" d="M0 23h24M1 0v23"/><path fill="none" stroke="#000" stroke-width="3" d="M2 19l6-6 4 3 9-9"/><path d="M16 5h7v7z"/></svg>
      <i class="sep sep-last"></i>
      <svg width="22" height="22" viewBox="0 0 22 22"><path fill="none" stroke="#000" stroke-width="2" d="M2 2h15l3 3v15H2zM6 2v6h9V2M6 20v-7h10v7"/></svg>
    </div>
  </div>
</body>
</html>
```

FILE: styles.css
```css
* { box-sizing: border-box; }
html, body { margin: 0; height: 100%; }
body { width: 1917px; height: 999px; overflow: hidden; background: #000; font-family: "Noto Sans", sans-serif; position: relative; }
ul { list-style: none; margin: 0; padding: 0; }
.defs { position: absolute; }

.edge { position: absolute; left: 0; top: 0; width: 4px; height: 995px; background: linear-gradient(#333 71px, #202124 71px); }

/* gmail */
.gmail { position: absolute; left: 4px; top: 0; width: 961px; height: 995px; display: flex; background: #f6f8fc; overflow: hidden; font-family: Inter, sans-serif; color: #444746; }
.rail { width: 85px; background: #e9f1fb; display: flex; flex-direction: column; align-items: center; padding-top: 22px; }
.burger { display: block; }
.rail-pill { width: 55px; height: 37px; margin-top: 54px; background: #d3e3fd; border-radius: 19px; display: flex; align-items: center; justify-content: center; position: relative; }
.badge { position: absolute; left: 25px; top: -5px; width: 34px; height: 19px; border-radius: 10px; background: #b3261e; color: #fff; font: 700 12.500px/19px Roboto, sans-serif; text-align: center; }
.rail-text { font-size: 15px; line-height: 18px; margin-top: 10px; }
.rail-on { color: #1f1f1f; font-weight: 600; font-size: 14.500px; margin-top: 4px; }
.rail-icon { margin-top: 28px; }
.rail-spaces { margin-top: 25px; }

.side { width: 319px; flex: none; }
.logo { height: 62px; padding-left: 29px; display: flex; align-items: center; gap: 13px; }
.logo-text { font: 400 28px "Open Sans", sans-serif; color: #5f6368; letter-spacing: -1.100px; }
.compose { margin: 19px 0 0 15px; width: 173px; height: 70px; border-radius: 24px; background: #c2e7ff; display: flex; align-items: center; padding-left: 20px; gap: 18px; font-size: 17px; font-weight: 500; color: #041e49; }
.nav { margin-top: 20px; }
.nav li { height: 40px; display: flex; align-items: center; font-size: 17px; padding-left: 36px; white-space: nowrap; position: relative; }
.nav svg { width: 24px; height: 24px; fill: #444746; margin-right: 20px; flex: none; }
.nav .bold { font-weight: 700; color: #1f1f1f; }
.nav .sub { padding-left: 46px; }
.nav .sub svg { margin-right: 20px; margin-left: 0; }
.nav .caret::before { content: ""; position: absolute; left: 22px; top: 18px; border: 5px solid transparent; border-top-color: #444746; border-bottom: 0; }
.labels-title { margin: 32px 0 0 33px; height: 28px; font-size: 20px; line-height: 28px; color: #1f1f1f; }
.nav-labels { margin-top: 15px; }

.gm-main { flex: none; width: 557px; }
.search { width: 720px; height: 61px; border-radius: 30px; background: #eaf1fb; display: flex; align-items: center; padding-left: 18px; gap: 12px; font: 400 19px Inter, sans-serif; color: #1f1f1f; margin-top: 0; }
.mail-card { margin-top: 10px; height: 904px; background: #fff; border-radius: 16px 0 0 16px; display: flex; }
.mail-body { width: 336px; border-right: 1px solid #dadce0; }
.mail-aside { flex: 1; display: flex; flex-direction: column; justify-content: flex-end; padding-left: 35px; overflow: hidden; }
.doc-box { height: 200px; width: 260px; border: 1px solid #dadce0; border-radius: 12px; padding: 60px 0 0 22px; flex: none; display: flex; flex-direction: column; justify-content: flex-end; padding-bottom: 23px; }
.doc-row { display: flex; align-items: center; gap: 18px; font: 400 17px Roboto, sans-serif; color: #5f6368; white-space: nowrap; }
.doc-owner { margin-bottom: 16px; }
.note { flex: none; height: 27px; margin: 33px 0 0 5px; width: 260px; background: #fef7e0; padding: 18px 0 0 31px; display: flex; gap: 12px; font: 400 17px Roboto, sans-serif; color: #3c4043; white-space: nowrap; overflow: hidden; border-radius: 8px 8px 0 0; }

/* files */
.files { position: absolute; left: 965px; top: 0; width: 952px; height: 995px; background: #1e1e1e; color: #e6e6e6; font-size: 14px; overflow: hidden; }
.files-top { height: 9px; background: #1c1c1c; border-bottom: 1px solid #111; padding-left: 105px; }
.files-search { width: 641px; height: 4px; background: #2d2d2d; border-radius: 0 0 6px 6px; }
.files-wrap { display: flex; height: 986px; }
.places { width: 240px; flex: none; background: #242424; border-right: 1px solid #3a3a3a; padding-top: 6px; }
.places li { height: 38px; display: flex; align-items: center; gap: 7px; padding-left: 20px; font-size: 14px; color: #e8e8e8; white-space: nowrap; }
.places svg { width: 16px; height: 16px; flex: none; color: #cfcfcf; }
.places .places-gap { margin-top: 723px; }
.file-list { flex: 1; padding-left: 20px; }
.file-head { height: 47px; display: flex; align-items: flex-start; padding: 8px 0 0 11px; font-size: 11px; font-weight: 600; color: #7a7a7a; letter-spacing: .7px; }
.fh-name { width: 461px; }
.fh-name em { font-style: normal; font-size: 13px; margin-left: 3px; line-height: 1; }
.fh-size { width: 78px; }
.file-row { height: 44px; margin-bottom: 8px; width: 675px; display: flex; align-items: center; border-radius: 8px; }
.file-row.sel { background: #26364f; }
.f-name { width: 452px; flex: none; display: flex; justify-content: flex-end; align-items: center; position: relative; white-space: nowrap; overflow: hidden; height: 44px; line-height: 44px; font-size: 14.300px; }
.f-doc { position: absolute; left: 16px; top: 7px; }
.f-size { width: 99px; flex: none; padding-left: 19px; color: #8e8e8e; white-space: nowrap; }
.f-mod { width: 61px; flex: none; text-align: right; color: #8e8e8e; white-space: nowrap; margin-left: 16px; }
.f-star { width: 18px; height: 18px; margin-left: 18px; color: #4e4e4e; }
.sel .f-star { color: #5a6c88; }
.sel .f-size, .sel .f-mod { color: #9aa3b2; }
.file-status { position: absolute; left: 765px; top: 966px; right: 0; height: 29px; background: #1c1c1c; border: 1px solid #3a3a3a; border-right: 0; border-bottom: 0; border-radius: 8px 0 0 0; padding-left: 15px; line-height: 28px; font-size: 13.800px; white-space: nowrap; color: #e6e6e6; }
.bottom-bar { position: absolute; left: 0; top: 995px; width: 1917px; height: 4px; background: #000; padding-left: 652px; }
.bottom-tab { width: 56px; height: 4px; background: #333; }

/* qgis */
.qgis { position: absolute; left: 233px; top: 172px; width: 1441px; height: 665px; background: #f6f5f4; border: 1px solid #111; border-top: 0; border-radius: 9px 9px 0 0; color: #2e3436; font-size: 14px; display: flex; flex-direction: column; box-shadow: 0 3px 10px rgba(0,0,0,.35); }
.q-title { height: 38px; flex: none; background: #353535; border-radius: 9px 9px 0 0; display: flex; justify-content: flex-end; align-items: center; padding-right: 11px; }
.q-close { color: #999; font-size: 13px; font-weight: 700; }
.q-menu { height: 24px; flex: none; display: flex; gap: 16px; padding-left: 11px; align-items: center; border-bottom: 1px solid #d8d4d0; background: #fafafa; }
.q-tools { height: 39px; flex: none; display: flex; justify-content: space-between; align-items: center; border-bottom: 1px solid #c8c4c0; background: linear-gradient(#fafafa, #f1efed); }
.q-left { display: flex; align-items: center; padding-left: 6px; }
.q-right { display: flex; align-items: center; padding-right: 2px; width: 175px; }
.grip { display: block; width: 5px; height: 20px; flex: none; background-image: radial-gradient(#aaa 1px, transparent 1.200px); background-size: 3px 3px; }
.q-left > .grip { margin-right: 8px; }
.q-left > .grip + svg { flex: none; }
.t1 { margin-left: 10px; }
.t1b { margin-left: 11px; }
.t1c { margin-left: 9px; }
.t2 { margin-left: 10px; }
.t2b { margin-left: 11px; }
.t2c { margin-left: 12px; }
.t3 { margin-left: 10px; }
.more { font-size: 15px; color: #333; width: 14px; text-align: center; line-height: 1; }
.q-right > .grip { margin-left: 10px; }
.r-abc { margin-left: 8px; }
.r-pie { margin-left: 14px; }
.q-right > .more { margin-left: auto; }
.q-right > .more:not(:last-child) { margin-left: 10px; }
.r-grip { margin-left: 6px !important; }
.r-a { margin-left: 9px; }
.r-drop { margin-left: 6px; margin-right: 5px; }
.r2-a { margin-left: -8px; }
.r2-b { margin-left: 4px; }
.r2 { margin-left: 9px; }
.r3a { margin-left: 2px; }
.r-grip3 { margin-left: 13px !important; }
.r3b { margin-left: 14px; }
.r3c { margin-left: 14px; }
.r3d { margin-left: 12px; }
.magnet { flex: none; }
.snap-btn { width: 31px; height: 31px; margin-left: 4px; background: #e4e2e0; border: 1px solid #d0ccc8; border-radius: 4px; display: flex; align-items: center; justify-content: center; flex: none; }
.snap-num { width: 120px; height: 26px; margin-left: 2px; color: #888; flex: none; }

.drop { display: inline-block; width: 0; height: 0; border: 4.500px solid transparent; border-top: 5px solid #6b6b6b; border-bottom: 0; flex: none; }

.q-body { flex: 1; min-height: 0; display: flex; justify-content: space-between; }
.layers { width: 300px; display: flex; flex-direction: column; }
.layers-title { height: 21px; line-height: 21px; padding-left: 4px; }
.layers-tools { height: 31px; display: flex; align-items: center; gap: 5.500px; padding: 0 0 3px 4px; }
.pressed { width: 24px; height: 22px; background: #dedbd8; border: 1px solid #c2bebb; border-radius: 3px; display: flex; align-items: center; justify-content: center; }
.eps { color: #5b2f7a; display: flex; align-items: flex-end; width: 20px; font-size: 15px; line-height: 18px; }
.layer-tree { height: 354px; flex: none; background: #fff; }
.layer { height: 24px; display: flex; align-items: center; padding-left: 24px; white-space: nowrap; overflow: hidden; font-weight: 600; font-size: 14.500px; letter-spacing: .9px; color: #222; }
.layer + .layer { height: 23px; }
.layer.on { background: #3584e4; color: #fff; }
.layer.on span { border-bottom: 1px solid #fff; line-height: 18px; }
.dot { width: 6px; height: 6px; border-radius: 50%; margin: 0 12px 0 11px; flex: none; }
.dot-o { background: #f28c1a; }
.dot-p { background: #8a4f96; width: 7px; height: 7px; }
.hscroll { height: 14px; flex: none; background: #fff; border-top: 1px solid #c8c4c0; border-bottom: 1px solid #c8c4c0; display: flex; align-items: center; padding-left: 6px; }
.arrow-left { width: 0; height: 0; border: 4px solid transparent; border-right: 5px solid #666; border-left: 0; }
.dock-tabs { height: 30px; display: flex; align-items: flex-start; padding-left: 1px; }
.dock-tab { height: 27px; width: 153px; background: #e4e2e0; border: 1px solid #d0ccc8; border-top: 0; border-radius: 0 0 3px 3px; padding-left: 13px; line-height: 28px; white-space: nowrap; font-size: 14.400px; }
.dock-tab2 { height: 27px; padding-left: 13px; line-height: 28px; }

.check { position: relative; display: inline-block; width: 14px; height: 14px; background: #fff; border: 1px solid #cfc9c4; border-radius: 2px; flex: none; }
.tick::after { content: ""; position: absolute; left: 4px; top: 0; width: 5px; height: 10px; border: solid #111; border-width: 0 2px 2px 0; transform: rotate(35deg); }

.style-panel { width: 174px; flex: none; display: flex; flex-direction: column; overflow: hidden; }
.panel-head { height: 20px; flex: none; display: flex; justify-content: flex-end; align-items: center; gap: 3px; padding: 2px 2px 0 0; }
.combo { height: 26px; display: flex; align-items: center; justify-content: space-between; background: linear-gradient(#fbfafa, #f1efed); border: 1px solid #cdc7c2; border-radius: 4px; padding: 0 5px 0 6px; white-space: nowrap; }
.layer-combo { flex: none; margin-top: 4px; margin-right: 2px; border-left: 0; border-radius: 0 4px 4px 0; padding: 0 9px 0 0; }
.panel-wrap { flex: none; margin-top: 13px; display: flex; height: 323px; }
.panel-main { flex: 1; padding-right: 2px; min-width: 0; }
.symbol-combo { justify-content: flex-end; margin-right: 1px; padding-right: 9px; }
.side-scroll { width: 14px; flex: none; background: #f6f5f4; border-left: 1px solid #ddd; display: flex; flex-direction: column; align-items: center; }
.side-scroll i, .mini-scroll i { display: block; flex: none; width: 0; height: 0; border: 4px solid transparent; }
.up { border-bottom: 5px solid #666 !important; border-top: 0 !important; margin: 6px 0 5px; }
.down { border-top: 5px solid #666 !important; border-bottom: 0 !important; margin: 5px 0 6px; }
.side-scroll b, .mini-scroll b { flex: 1; width: 100%; }
.sym-row { margin-top: 8px; display: flex; gap: 7px; }
.sym-list { width: 97px; height: 130px; background: #fff; border: 1px solid #c8c4c0; border-left: 0; }
.sym-on { height: 23px; background: #3584e4; }
.sym-btns { display: grid; grid-template-columns: 24px 24px; grid-auto-rows: 22px; gap: 6px; }
.sq { border: 1px solid #d8d4d0; border-radius: 3px; display: flex; align-items: center; justify-content: center; background: #faf9f8; }
.color-wrap { margin-top: 15px; display: flex; height: 72px; }
.color-left { width: 143px; }
.color-row { margin-top: 8px; height: 18px; display: flex; align-items: center; }
.color-bar { width: 119px; height: 17px; background: #f9a31d; border-radius: 0 3px 3px 0; }
.color-drop { width: 13px; height: 22px; margin-left: 4px; background: #fff; border: 1px solid #cdc7c2; border-radius: 3px; display: flex; align-items: center; justify-content: center; }
.color-drop .drop { border-width: 3.500px; border-top-width: 4px; border-bottom: 0; }
.opacity-row { margin-top: 12px; display: flex; align-items: center; gap: 9px; }
.hline { width: 99px; height: 1px; margin-top: 8px; background: #d8d4d0; }
.field { position: relative; display: flex; align-items: center; height: 26px; background: #fff; border: 1px solid #cdc7c2; border-radius: 4px; padding: 0 4px; white-space: nowrap; overflow: hidden; }
.spin::before, .spin::after { content: ""; position: absolute; right: 3px; border: 3.500px solid transparent; }
.spin { position: absolute; right: 0; top: 0; bottom: 0; width: 13px; border-left: 1px solid #dcd8d4; }
.spin::before { top: 4px; border-bottom: 4px solid #777; border-top: 0; }
.spin::after { bottom: 4px; border-top: 4px solid #777; border-bottom: 0; }
.spin-a { width: 99px; height: 23px; border-left: 0; border-radius: 0 4px 4px 0; padding-left: 2px; }
.mini-scroll { width: 14px; background: #f6f5f4; border-left: 1px solid #ddd; border-right: 1px solid #ddd; display: flex; flex-direction: column; align-items: center; }
.slider-row { height: 24px; margin-top: 47px; display: flex; align-items: center; }
.slider { width: 46px; height: 5px; background: #3584e4; position: relative; margin-right: 6px; }
.slider b { position: absolute; right: -3px; top: -4px; width: 10px; height: 13px; background: #f1efed; border: 1px solid #b5b0ab; border-radius: 2px; }
.spin-b { width: 98px; height: 24px; }
.apply-row { flex: none; margin-top: 6px; height: 27px; display: flex; align-items: center; gap: 13px; padding-left: 3px; white-space: nowrap; }
.apply { width: 80px; height: 27px; background: #fbfafa; border: 1px solid #cdc7c2; border-radius: 4px; display: flex; align-items: center; justify-content: center; gap: 1px; }
.panel-tabs { flex: none; margin-top: 3px; height: 28px; display: flex; padding-left: 15px; border-top: 1px solid #cdc7c2; }
.ptab { width: 103px; height: 26px; background: #e4e2e0; border: 1px solid #d0ccc8; border-top: 0; border-radius: 0 0 3px 3px; text-align: center; line-height: 25px; }
.ptab-on { width: 55px; background: #fbfafa; margin-top: -1px; height: 28px; line-height: 29px; }

.q-status { height: 34px; flex: none; display: flex; align-items: center; padding: 3px 0 0 4px; font-size: 11.500px; background: #f6f5f4; position: relative; }
.locator { width: 265px; height: 26px; flex: none; margin-bottom: 3px; background: #fff; border: 1px solid #cdc7c2; border-radius: 4px; display: flex; align-items: center; gap: 6px; padding-left: 7px; font-size: 14px; color: #8a8a8a; white-space: nowrap; }
.q-status .field { height: 26px; flex: none; margin-bottom: 3px; }
.st-msg { margin-left: 9px; width: 221px; flex: none; white-space: nowrap; }
.st-lab { flex: none; white-space: nowrap; width: 62px; }
.st-coord { width: 146px; padding-left: 11px; font-size: 11.600px; }
.st-ico { margin-left: 4px; width: 16px; flex: none; margin-right: 13px; }
.st-scale { width: 31px; }
.st-scalebox { width: 101px; padding-left: 4px; font-size: 12.500px; }
.st-arrow { position: absolute; right: 0; top: 0; bottom: 0; width: 20px; border-left: 1px solid #dcd8d4; display: flex; align-items: center; justify-content: center; }
.st-lock { margin-left: 13px; margin-right: 8px; flex: none; }
.st-mag { width: 54px; }
.st-spin { width: 95px; padding-left: 4px; font-size: 12.500px; }
.st-spin + .st-rot { margin-left: 9px; width: 55px; }
.st-check { margin-left: 6px; }
.st-render { margin-left: 5px; width: 54px; }
.st-globe { flex: none; }
.st-epsg { margin-left: 2px; width: 80px; font-size: 12px; }
.st-msgs { flex: none; margin-left: 3px; }
.st-grip { position: absolute; right: 0; bottom: 1px; height: 12px; width: 12px; }

/* dialog */
.viewer { position: absolute; left: 407px; top: 78px; width: 1093px; height: 733px; background: #f6f5f4; border-radius: 9px 9px 0 0; border: 1px solid #111; border-top: 0; color: #2e3436; font-size: 14px; display: flex; flex-direction: column; box-shadow: 0 2px 9px rgba(0,0,0,.6); }
.v-title { height: 37px; flex: none; background: #282828; border-bottom: 1px solid #111; border-radius: 9px 9px 0 0; color: #ddd; font-weight: 600; font-size: 14px; letter-spacing: .9px; display: flex; align-items: center; justify-content: center; position: relative; }
.v-close { position: absolute; right: 11px; top: 11px; font-size: 12px; color: #eee; line-height: 14px; }
.v-options { height: 160px; flex: none; display: grid; grid-template-columns: 221px 193px 183px 196px 248px; column-gap: 7px; padding: 0 0 0 12px; }
.group h4 { margin: 0; font-weight: 400; font-size: 14px; height: 35px; line-height: 21px; padding-top: 12px; margin-left: -1px; }
.box { height: 118px; background: #f2f1f0; border: 1px solid #ddd9d6; border-radius: 2px; }
.o-row { display: flex; align-items: center; height: 27px; margin-bottom: 6px; }
.box-scale { padding: 11px 0 0 10px; }
.field.date { width: 101px; height: 27px; padding: 0 24px 0 4px; }
.field.focus { border-color: #3584e4; }
mark { background: #3584e4; color: #fff; }
.date-arrow { position: absolute; right: 0; top: 0; bottom: 0; width: 20px; border-left: 1px solid #dcd8d4; display: flex; align-items: center; justify-content: center; }
.lab-date { width: 67px; flex: none; }
.refresh { width: 24px; height: 23px; margin-left: 6px; background: #f3f2f1; border: 1px solid #cdc7c2; border-radius: 4px; display: flex; align-items: center; justify-content: center; }
.lab-miny { width: 44px; }
.field.num-a { width: 49px; height: 27px; padding: 0 1px; }
.lab-maxy { width: 46px; margin-left: 11px; }
.field.num-b { width: 48px; height: 27px; padding: 0 3px; }
.box-replica { padding: 11px 0 0 11px; }
.rep-up { height: 23px; margin-bottom: 10px; }
.rep-mid { margin-bottom: 9px; }
.chk-text { margin-left: 5px; }
.rep-input { width: 124px; height: 27px; padding-left: 2px; }
.rep-unit { margin-left: 7px; }
.box-chart { padding: 4px 0 0 5px; display: grid; grid-template-columns: 70px 1fr; grid-auto-rows: 27px; }
.c-item { display: flex; align-items: center; gap: 5px; white-space: nowrap; }
.box-axis { padding: 20px 0 0 6px; }
.a-row { display: flex; align-items: center; height: 26px; }
.a-row label { width: 52px; flex: none; text-align: center; padding-right: 8px; line-height: 17px; }
.a-row .field { width: 124px; }
.a-y { margin-top: 22px; }
.a-y label { padding-left: 7px; padding-right: 1px; }
.box-title { padding: 10px 0 0 10px; display: grid; grid-template-columns: 124px 93px; grid-auto-rows: 26px; gap: 7px; }
.v-chart { flex: none; height: 480px; margin: 0 11px; background: #fff; }
.plot { display: block; }
.p-title { font: 400 16.750px "DejaVu Sans", sans-serif; fill: #111; }
.p-ticks, .p-ticks text { font: 400 13.900px "DejaVu Sans", sans-serif; fill: #111; }
.v-foot { flex: 1; display: flex; align-items: center; padding: 0 0 4px 20px; }
.sep { width: 1px; height: 20px; background: #dcd8d4; margin: 0 7.500px; flex: none; }
.sep-mid { margin-right: 8.500px; }
.sep-last { margin-right: 8.500px; }
.f-gap { margin-left: 11px; }
.f-gap2 { margin-left: 9px; }
```
